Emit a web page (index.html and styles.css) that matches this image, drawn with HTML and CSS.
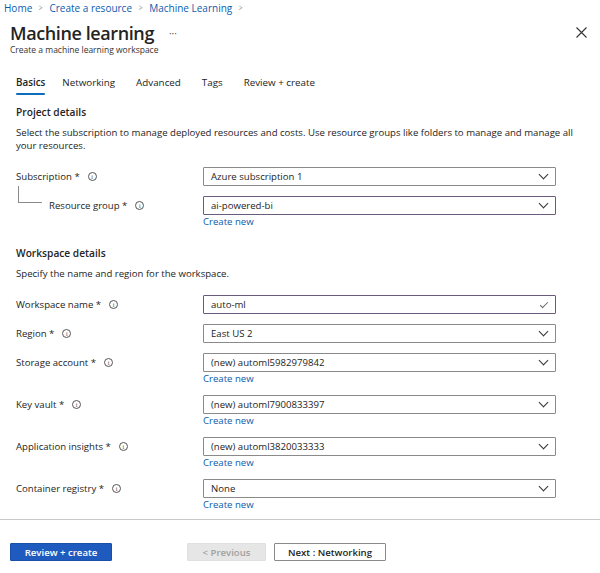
FILE: index.html
```html
<!DOCTYPE html>
<html>
<head>
<meta charset="utf-8">
<link rel="stylesheet" href="styles.css">
</head>
<body>
<div class="page">
  <nav class="crumbs">
    <a>Home</a><span class="sep">&gt;</span><a>Create a resource</a><span class="sep">&gt;</span><a>Machine Learning</a><span class="sep">&gt;</span>
  </nav>
  <header class="head">
    <div class="titles">
      <div class="title-row"><h1>Machine learning</h1><span class="more">···</span></div>
      <div class="subtitle">Create a machine learning workspace</div>
    </div>
    <svg class="close" width="11" height="11" viewBox="0 0 11 11"><path d="M0.5 0.5L10.5 10.5M10.5 0.5L0.5 10.5" stroke="#333" stroke-width="1.1" fill="none"/></svg>
  </header>
  <div class="tabs">
    <span class="tab active">Basics</span>
    <span class="tab">Networking</span>
    <span class="tab">Advanced</span>
    <span class="tab">Tags</span>
    <span class="tab">Review + create</span>
  </div>
  <section class="form">
    <h2>Project details</h2>
    <p class="desc">Select the subscription to manage deployed resources and costs. Use resource groups like folders to manage and manage all your resources.</p>
    <div class="row">
      <label>Subscription *<i class="info">i</i></label>
      <div class="field"><div class="select">Azure subscription 1<span class="chev"></span></div></div>
    </div>
    <div class="row">
      <label class="sub-label"><span class="tree"></span>Resource group *<i class="info">i</i></label>
      <div class="field"><div class="select focus">ai-powered-bi<span class="chev"></span></div><a class="new">Create new</a></div>
    </div>

    <h2 class="h-ws">Workspace details</h2>
    <p class="desc">Specify the name and region for the workspace.</p>
    <div class="row">
      <label>Workspace name *<i class="info">i</i></label>
      <div class="field"><div class="select focus">auto-ml<span class="check"></span></div></div>
    </div>
    <div class="row">
      <label>Region *<i class="info">i</i></label>
      <div class="field"><div class="select">East US 2<span class="chev"></span></div></div>
    </div>
    <div class="row">
      <label>Storage account *<i class="info">i</i></label>
      <div class="field"><div class="select">(new) automl5982979842<span class="chev"></span></div><a class="new">Create new</a></div>
    </div>
    <div class="row">
      <label>Key vault *<i class="info">i</i></label>
      <div class="field"><div class="select">(new) automl7900833397<span class="chev"></span></div><a class="new">Create new</a></div>
    </div>
    <div class="row">
      <label>Application insights *<i class="info">i</i></label>
      <div class="field"><div class="select">(new) automl3820033333<span class="chev"></span></div><a class="new">Create new</a></div>
    </div>
    <div class="row last">
      <label>Container registry *<i class="info">i</i></label>
      <div class="field"><div class="select">None<span class="chev"></span></div><a class="new">Create new</a></div>
    </div>
  </section>
  <footer class="foot">
    <button class="btn primary">Review + create</button>
    <button class="btn disabled">&lt; Previous</button>
    <button class="btn next">Next : Networking</button>
  </footer>
</div>
</body>
</html>
```
FILE: styles.css
```css
* { box-sizing: border-box; }
html, body { margin: 0; padding: 0; background: #fff; }
body { font-family: "Open Sans", "Noto Sans", sans-serif; color: #242424; font-size: 9.6px; }
.page { width: 600px; height: 573px; overflow: hidden; }

.crumbs { padding: 1px 0 0 4px; height: 15px; line-height: 14px; font-size: 10px; color: #0b5cad; display: flex; align-items: center; }
.crumbs a { color: #0b5cad; }
.crumbs .sep { color: #8a8a8a; margin: 0 6px; font-size: 9px; transform: scaleX(0.7); display: inline-block; }

.head { display: flex; justify-content: space-between; align-items: flex-start; padding: 6px 13px 0 10px; height: 40px; }
.title-row { display: flex; align-items: center; height: 24px; }
h1 { margin: 0; font-size: 18px; line-height: 24px; font-weight: 600; color: #242424; letter-spacing: -0.4px; }
.more { margin-left: 15px; color: #555; font-size: 10px; }
.subtitle { font-size: 8.5px; color: #333; line-height: 10px; }
.close { margin-top: 6px; }

.tabs { display: flex; padding: 19px 0 0 16px; height: 50px; }
.tab { margin-right: 21px; font-size: 9.8px; color: #242424; height: 20px; line-height: 18px; position: relative; }
.tab:first-child { margin-right: 17px; }
.tab.active { font-weight: 600; }
.tab.active::after { content: ""; position: absolute; left: 0; right: 0; bottom: -1px; height: 2px; background: #0f6cbd; border-radius: 1px; }

.form { padding: 0 16px; }
h2 { margin: 0; font-size: 10.2px; font-weight: 600; line-height: 14px; color: #242424; }
.desc { margin: 7px 0 15px; font-size: 9.6px; line-height: 13px; color: #242424; }
.h-ws { margin-top: 18px; }

.row { display: grid; grid-template-columns: 187px 353px; margin-bottom: 10px; }
.row.last { margin-bottom: 8px; }
label { display: flex; align-items: center; height: 19px; font-size: 9.6px; color: #242424; }
.info { font-style: normal; display: inline-flex; align-items: center; justify-content: center; width: 9px; height: 9px; border: 0.8px solid #555; border-radius: 50%; font-size: 6px; color: #444; margin-left: 8px; line-height: 1; font-family: "Liberation Serif", serif; }
.sub-label { padding-left: 33px; position: relative; }
.tree { position: absolute; left: 2px; top: -10px; width: 24px; height: 17px; border-left: 1px solid #8a8a8a; border-bottom: 1px solid #8a8a8a; }

.field { display: flex; flex-direction: column; }
.select { height: 19px; border: 1px solid #8a8a8a; border-radius: 1px; padding: 0 0 0 7px; display: flex; align-items: center; font-size: 9.6px; color: #242424; position: relative; }
.select.focus { border-color: #6b5b7b; }
.chev { position: absolute; right: 8px; top: 3px; width: 7px; height: 7px; border-right: 1px solid #333; border-bottom: 1px solid #333; transform: rotate(45deg); }
.check { position: absolute; right: 9px; top: 4px; width: 4px; height: 8px; border-right: 1px solid #666; border-bottom: 1px solid #666; transform: rotate(45deg); }
.new { color: #0b5cad; font-size: 9.6px; line-height: 13px; }

.foot { border-top: 1px solid #c8c8c8; padding: 23px 0 0 10px; display: flex; align-items: center; }
.btn { font-family: "Open Sans", "Noto Sans", sans-serif; font-size: 9.6px; height: 18px; padding: 0; border-radius: 1px; font-weight: 600; }
.primary { width: 102px; background: #1f5bbf; color: #fff; border: 1px solid #1a4fa8; }
.disabled { margin-left: 75px; width: 79px; background: #e6e6e6; color: #a0a0a0; border: 1px solid #e0e0e0; }
.next { margin-left: 8px; width: 112px; background: #fff; color: #242424; border: 1px solid #8a8a8a; }
```
